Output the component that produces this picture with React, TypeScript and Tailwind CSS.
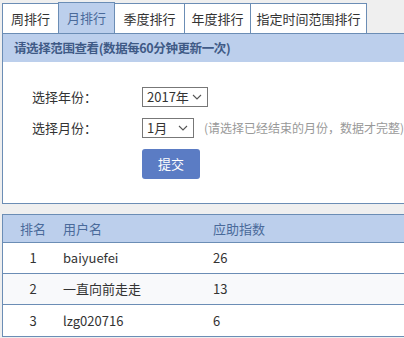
import React from 'react';

const tabs = ['周排行', '月排行', '季度排行', '年度排行', '指定时间范围排行'];
const tabWidths = ['w-[57px]', 'w-[57px]', 'w-[71px]', 'w-[67px]', 'w-[117px]'];

const rows = [
  { rank: 1, name: 'baiyuefei', score: 26 },
  { rank: 2, name: '一直向前走走', score: 13 },
  { rank: 3, name: 'lzg020716', score: 6 },
];

const font = { fontFamily: "'Noto Sans CJK SC', 'Liberation Sans', sans-serif" };

function Chevron() {
  return (
    <svg width="10" height="6" viewBox="0 0 10 6" className="text-[#555]">
      <path d="M1 1l4 4 4-4" fill="none" stroke="currentColor" strokeWidth="1.1" />
    </svg>
  );
}

export default function App() {
  return (
    <div className="w-[404px] h-[338px] overflow-hidden bg-[#efefef] text-[13px] text-[#333]" style={font}>
      <div className="w-[430px] pl-[2px] pt-[2px]">
        {/* Tabs */}
        <div className="flex h-[31px]">
          {tabs.map((t, i) => (
            <div
              key={t}
              className={`${tabWidths[i]} flex items-center justify-center border border-[#6b8db5] -ml-px first:ml-0 border-b-0 ${
                i === 1 ? 'bg-[#bccfec] text-[#4a6a9a]' : 'bg-white mt-px'
              }`}
            >
              {t}
            </div>
          ))}
        </div>

        {/* Filter panel */}
        <div className="border border-[#6b8db5] bg-white">
          <div className="h-[28px] bg-[#bccfec] flex items-center pl-[11px] font-bold text-[12.5px] text-[#3f5a86] tracking-[-0.4px]">
            请选择范围查看(数据每60分钟更新一次)
          </div>
          <div className="pl-[29px] pt-[25px] pb-[24px]">
            <div className="flex items-center h-[20px]">
              <span className="w-[110px]">选择年份：</span>
              <div className="w-[66px] h-[20px] border border-[#777] flex items-center justify-between pl-[4px] pr-[5px]">
                <span>2017年</span>
                <Chevron />
              </div>
            </div>
            <div className="flex items-center h-[20px] mt-[11px]">
              <span className="w-[110px]">选择月份：</span>
              <div className="w-[52px] h-[20px] border border-[#777] flex items-center justify-between pl-[4px] pr-[5px]">
                <span>1月</span>
                <Chevron />
              </div>
              <span className="ml-[10px] text-[12px] text-[#999] whitespace-nowrap">(请选择已经结束的月份，数据才完整)</span>
            </div>
            <button className="ml-[110px] mt-[11px] w-[58px] h-[30px] rounded-[3px] bg-[#5b7cc4] text-white">
              提交
            </button>
          </div>
        </div>

        {/* Ranking table */}
        <div className="mt-[10px] border border-[#6b8db5] bg-white">
          <div className="flex items-center h-[28px] bg-[#bccfec] text-[#4a6a9a] border-b border-[#6b8db5]">
            <span className="w-[60px] text-center">排名</span>
            <span className="w-[150px]">用户名</span>
            <span>应助指数</span>
          </div>
          {rows.map((r, i) => (
            <div
              key={r.rank}
              className={`flex items-center h-[31px] ${i < rows.length - 1 ? 'border-b border-[#6b8db5]' : 'h-[30px]'} ${
                i === 1 ? 'bg-[#f8f9fb]' : 'bg-white'
              }`}
            >
              <span className="w-[60px] text-center">{r.rank}</span>
              <span className="w-[150px]">{r.name}</span>
              <span>{r.score}</span>
            </div>
          ))}
        </div>
      </div>
    </div>
  );
}
